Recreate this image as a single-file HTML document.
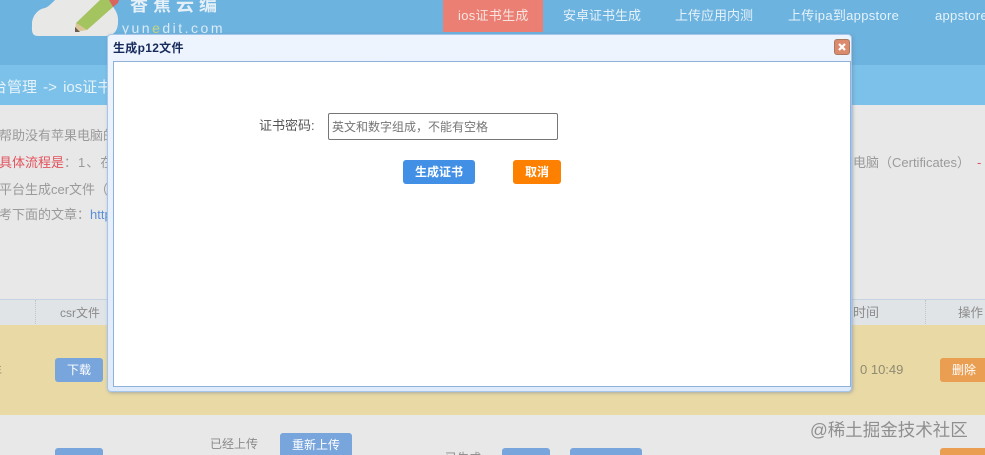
<!DOCTYPE html>
<html lang="zh">
<head>
<meta charset="utf-8">
<style>
html,body{margin:0;padding:0;width:985px;height:455px;overflow:hidden}
#w{position:relative;width:985px;height:455px;overflow:hidden;background:#e8e8e8;font-family:"Liberation Sans","Noto Sans CJK SC",sans-serif;font-size:13px;color:#8a8a8a}
.a{position:absolute;white-space:nowrap}
.btn{position:absolute;border-radius:3px;color:#fff;text-align:center;font-size:12px}
.blue{background:#78a5dc}
.org{background:#e99e52}
.nav{position:absolute;top:8px;font-size:13px;color:#e6f2fa;white-space:nowrap;line-height:16px}
</style>
</head>
<body>
<div id="w">
<div class="a" style="left:0;top:0;width:985px;height:65px;background:#6cb3e0"></div>
<div class="a" style="left:0;top:65px;width:985px;height:40px;background:#7bc1e9"></div>

<!-- logo -->
<svg class="a" style="left:30px;top:0" width="95" height="38" viewBox="0 0 95 38">
<path d="M8 36 C1 36 2 30 2 24 C2 16 8 9 15 8 C18 7 21 4 25 0 L76 0 C84 6 89 14 88 22 C88 30 84 36 76 36 Z" fill="#e8e8e6"/>
<path d="M46 23 L70 0 L83 0 L83 7 L57 30 Z" fill="#a3c45e"/>
<path d="M46 23 L45 32 L57 30 Z" fill="#d9c596"/>
<path d="M45 27 L45 32 L50 32 Z" fill="#6a5a50"/>
<path d="M79 0 L89 0 L88 3 L83 7 Z" fill="#d9655f"/>
</svg>
<div class="a" style="left:130px;top:-6px;font-size:18px;font-weight:bold;letter-spacing:5px;color:#e4eff7;line-height:22px">香蕉云编</div>
<div class="a" style="left:122px;top:19px;font-size:14px;letter-spacing:2.5px;color:#dcebf5;line-height:18px">yun<span style="color:#c8d67a">e</span>dit.com</div>

<!-- nav -->
<div class="a" style="left:443px;top:0;width:100px;height:32px;background:#ec7f73"></div>
<div class="nav" style="left:458px;color:#f8e4e0;letter-spacing:.3px">ios证书生成</div>
<div class="nav" style="left:563px">安卓证书生成</div>
<div class="nav" style="left:675px">上传应用内测</div>
<div class="nav" style="left:788px;letter-spacing:.3px">上传ipa到appstore</div>
<div class="nav" style="left:935px;letter-spacing:.3px">appstore</div>

<div class="a" style="left:-8px;top:78px;font-size:15px;color:#e6f3fb;line-height:20px;word-spacing:2px">台管理 -&gt; ios证书</div>

<!-- intro text -->
<div class="a" style="left:-1px;top:127px;line-height:17px;color:#9a9a9a">帮助没有苹果电脑的</div>
<div class="a" style="left:-1px;top:154px;line-height:17px;color:#9a9a9a"><span style="color:#e2525c">具体流程是</span><span style="letter-spacing:1px">：1、</span>在</div>
<div class="a" style="left:-1px;top:181px;line-height:17px;color:#9a9a9a">平台生成cer文件（</div>
<div class="a" style="left:-1px;top:206px;line-height:17px;color:#9a9a9a">考下面的文章：<span style="color:#5b8fd8">http</span></div>
<div class="a" style="left:853px;top:154px;line-height:17px;color:#9a9a9a">电脑（Certificates）</div>
<div class="a" style="left:977px;top:154px;line-height:17px;color:#e2525c">-</div>

<!-- table head -->
<div class="a" style="left:0;top:299px;width:985px;height:25px;background:#e0e4e7;border-top:1px solid #c5d3e3"></div>
<div class="a" style="left:35px;top:300px;height:24px;border-left:1px dotted #c0c4c8"></div>
<div class="a" style="left:925px;top:300px;height:24px;border-left:1px dotted #c0c4c8"></div>
<div class="a" style="left:60px;top:305px;font-size:12px;line-height:16px;color:#8a8a8a">csr文件</div>
<div class="a" style="left:853px;top:305px;font-size:13px;line-height:16px;color:#8a8a8a">时间</div>
<div class="a" style="left:958px;top:305px;font-size:12.5px;line-height:16px;color:#8a8a8a">操作</div>

<!-- row 1 -->
<div class="a" style="left:0;top:325px;width:985px;height:90px;background:#e9d9a5"></div>
<div class="btn blue" style="left:55px;top:358px;width:48px;height:24px;line-height:24px">下载</div>
<div class="a" style="left:-10px;top:363px;font-size:12px;line-height:16px;color:#8f8a72">年</div>
<div class="a" style="left:860px;top:362px;font-size:13px;line-height:16px;color:#8f8a72">0 10:49</div>
<div class="btn org" style="left:940px;top:358px;width:48px;height:24px;line-height:24px">删除</div>

<!-- row 2 -->
<div class="a" style="left:210px;top:436px;font-size:12px;line-height:16px;color:#8a8a8a">已经上传</div>
<div class="btn blue" style="left:280px;top:433px;width:72px;height:30px;line-height:25px">重新上传</div>
<div class="btn blue" style="left:55px;top:448px;width:48px;height:24px"></div>
<div class="a" style="left:445px;top:450px;font-size:12px;line-height:16px;color:#8a8a8a">已生成</div>
<div class="btn blue" style="left:502px;top:448px;width:48px;height:24px"></div>
<div class="btn blue" style="left:570px;top:448px;width:72px;height:24px"></div>
<div class="btn org" style="left:940px;top:448px;width:48px;height:24px"></div>

<div class="a" style="left:810px;top:419px;font-size:17.5px;line-height:22px;color:#8f8f8f">@稀土掘金技术社区</div>

<!-- dialog -->
<div class="a" style="left:107px;top:34px;width:745px;height:358px;box-sizing:border-box;border:1px solid #a4c6ea;border-radius:4px;background:linear-gradient(#eef4fe,#dfeafb);box-shadow:1px 1px 3px rgba(110,130,150,.55)"></div>
<div class="a" style="left:113px;top:41px;font-size:12px;font-weight:bold;letter-spacing:.3px;line-height:14px;color:#15295a">生成p12文件</div>
<div class="a" style="left:834px;top:39px;width:16px;height:16px;box-sizing:border-box;border:1px solid #a9785f;border-radius:3px;background:#dc8a6e"></div>
<svg class="a" style="left:834px;top:39px" width="16" height="16"><path d="M5 5 L11 11 M11 5 L5 11" stroke="#fff" stroke-width="2.2"/></svg>
<div class="a" style="left:113px;top:61px;width:738px;height:326px;box-sizing:border-box;border:1px solid #8eb2d9;background:#fff"></div>

<div class="a" style="left:259px;top:118px;font-size:13px;line-height:16px;color:#555">证书密码:</div>
<div class="a" style="left:328px;top:113px;width:230px;height:27px;box-sizing:border-box;border:1px solid #767676;border-radius:2px;background:#fff"></div>
<div class="a" style="left:332px;top:119px;font-size:12px;line-height:16px;color:#757575">英文和数字组成，不能有空格</div>
<div class="btn" style="left:403px;top:160px;width:72px;height:24px;line-height:24px;background:#428fe6;font-weight:bold">生成证书</div>
<div class="btn" style="left:513px;top:160px;width:48px;height:24px;line-height:24px;background:#fd8000;font-weight:bold">取消</div>
</div>
</body>
</html>
